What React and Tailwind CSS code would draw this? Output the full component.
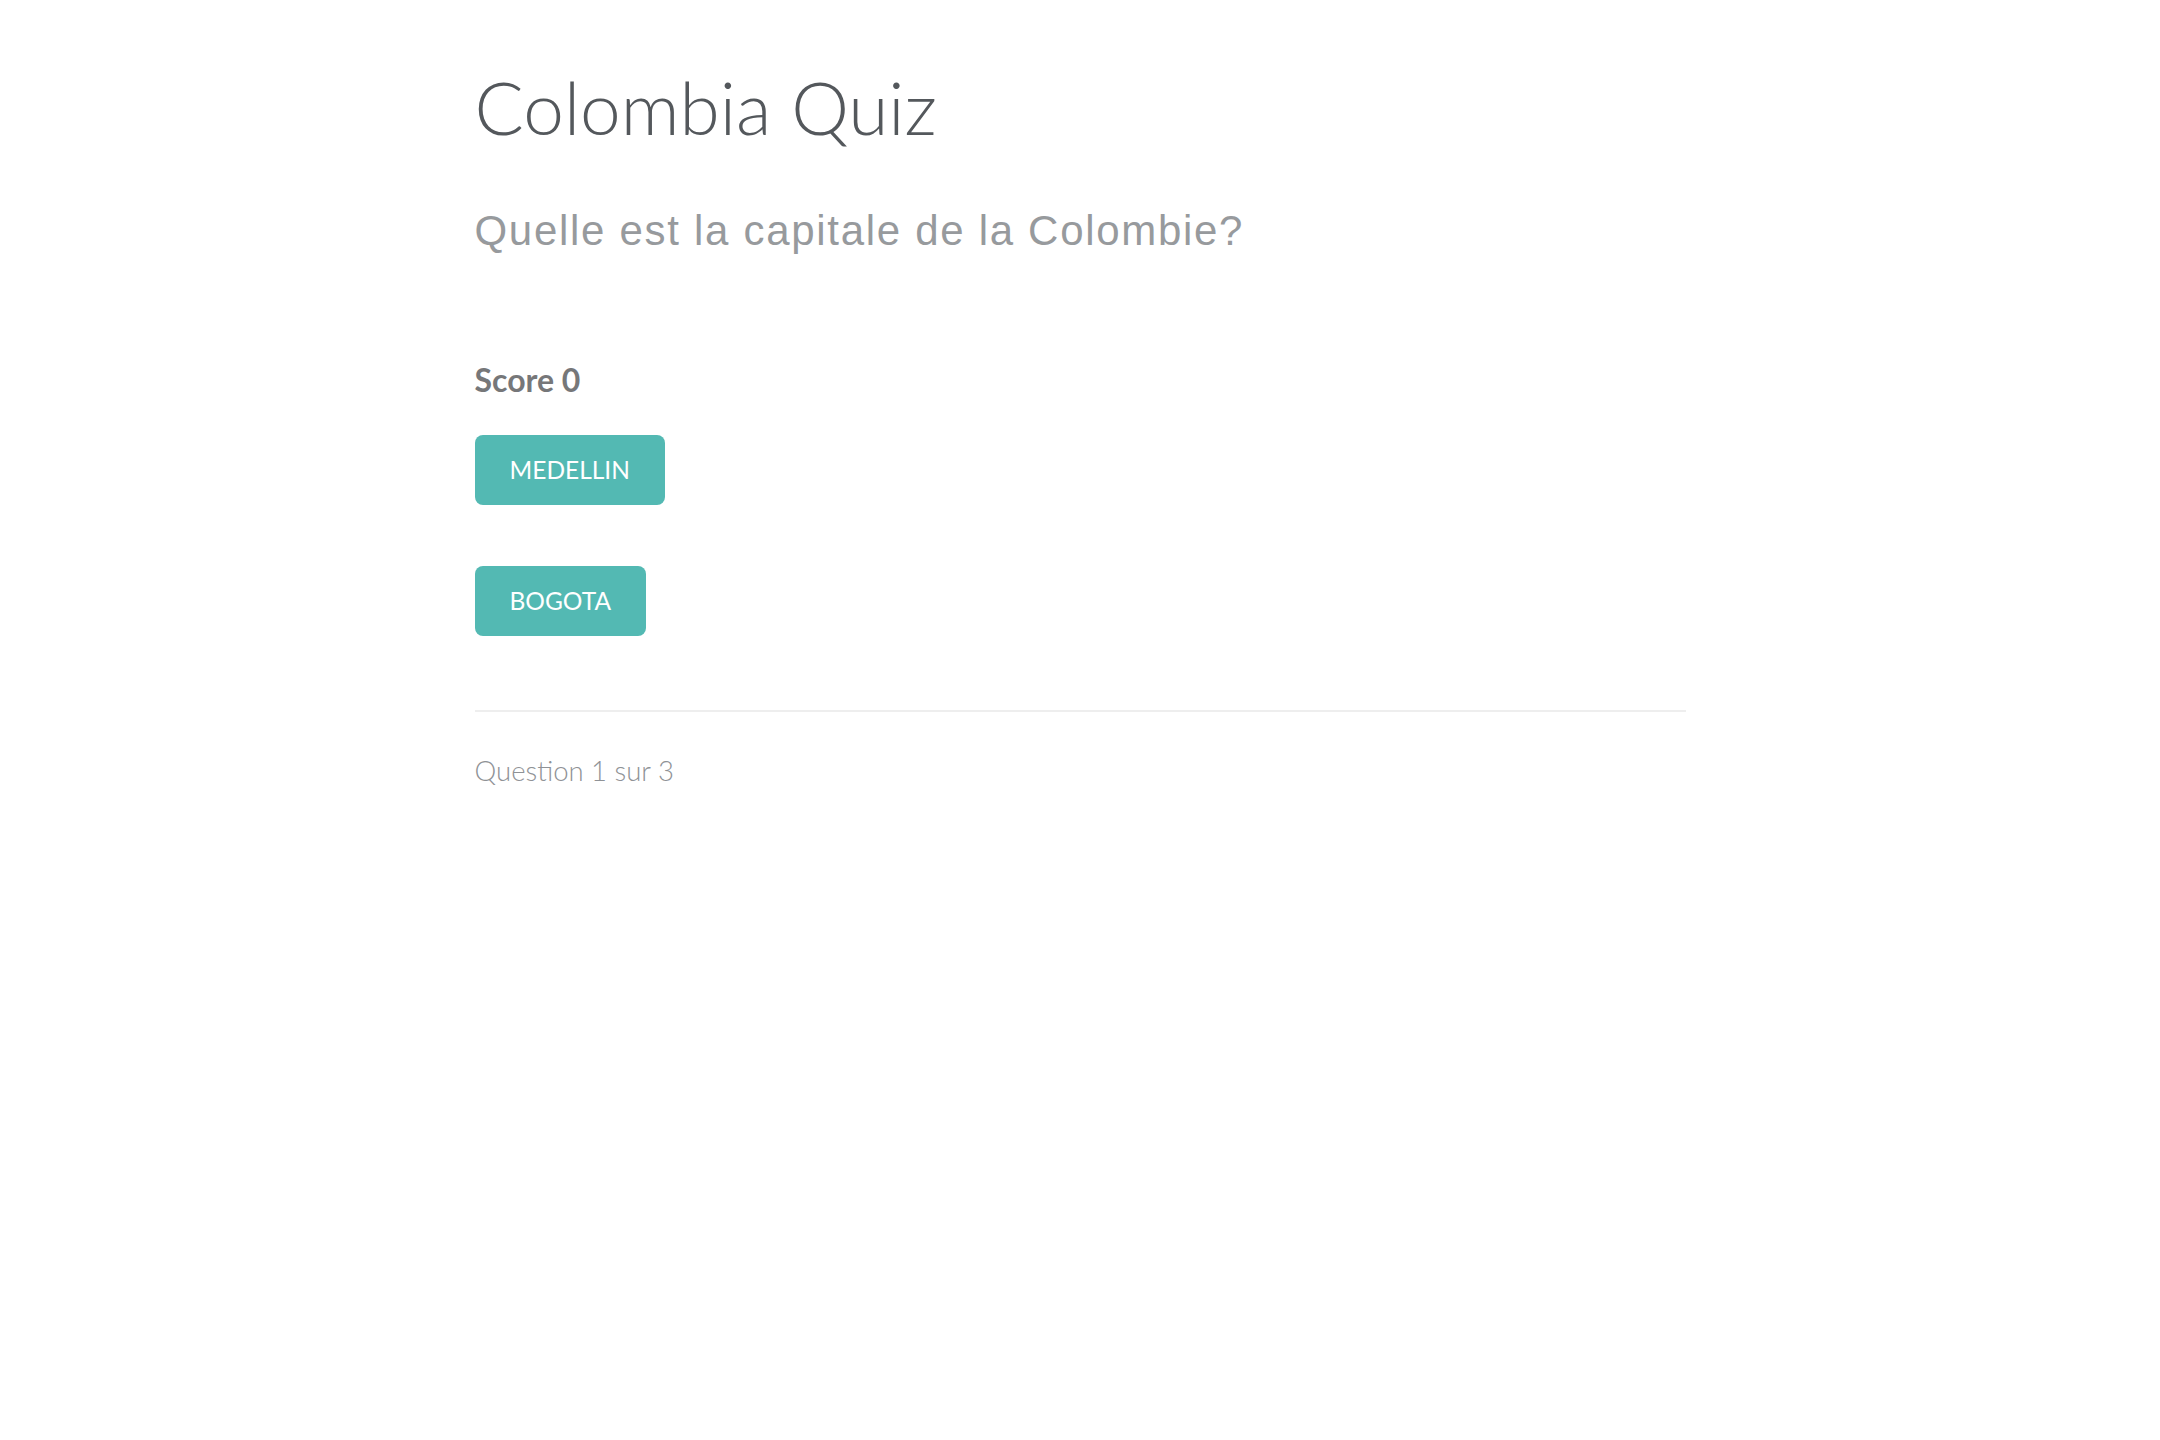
import React from "react";

export default function App() {
  return (
    <div className="min-h-screen bg-white">
      <div className="mx-auto w-[1211px] pt-[63px]">
        <h1 className="text-[73px] leading-[88px] font-light text-[#54585c] [font-family:Lato,'Noto_Sans',sans-serif]">
          Colombia Quiz
        </h1>
        <h2 className="mt-[57px] text-[42px] leading-[46px] tracking-[1.7px] text-[#979a9d] [font-family:'Liberation_Sans',Arial,sans-serif]">
          Quelle est la capitale de la Colombie?
        </h2>
        <div className="mt-[107px] text-[32px] leading-[38px] font-bold text-[#767779] [font-family:Lato,sans-serif]">
          Score 0
        </div>
        <div className="mt-[36px] flex flex-col items-start gap-[61px]">
          <button className="h-[70px] px-[35px] rounded-[8px] bg-[#53b9b3] text-white text-[24.5px] [font-family:Lato,sans-serif]">
            MEDELLIN
          </button>
          <button className="h-[70px] px-[35px] rounded-[8px] bg-[#53b9b3] text-white text-[24.5px] [font-family:Lato,sans-serif]">
            BOGOTA
          </button>
        </div>
        <hr className="mt-[74px] border-0 border-t-2 border-[#eeeeee]" />
        <div className="mt-[42px] text-[27.5px] leading-[34px] font-light text-[#8f9296] [font-family:Lato,sans-serif]">
          Question 1 sur 3
        </div>
      </div>
    </div>
  );
}
